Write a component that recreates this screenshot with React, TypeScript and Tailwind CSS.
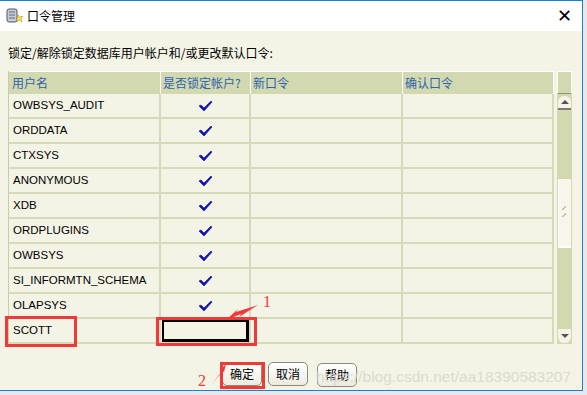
import React from "react";

const users = [
  "OWBSYS_AUDIT",
  "ORDDATA",
  "CTXSYS",
  "ANONYMOUS",
  "XDB",
  "ORDPLUGINS",
  "OWBSYS",
  "SI_INFORMTN_SCHEMA",
  "OLAPSYS",
];

const cjk = { fontFamily: '"Noto Sans CJK SC", "Liberation Sans", sans-serif' };
const latin = { fontFamily: '"Liberation Sans", Arial, sans-serif' };

function Check() {
  return (
    <svg width="15" height="12" viewBox="0 0 15 12">
      <path d="M1 6 L3 5 L6 8 L13 1 L14 2 L6 11 Z" fill="#1010c8" stroke="#0a0a90" strokeWidth="0.6" />
    </svg>
  );
}

function KeyIcon() {
  return (
    <svg width="18" height="18" viewBox="0 0 18 18">
      <rect x="1" y="2" width="10" height="13" rx="2" fill="#c8ccd8" stroke="#556" strokeWidth="1" />
      <path d="M3 5h6M3 8h6M3 11h6" stroke="#667" strokeWidth="1" />
      <path d="M12 8l2 2 3-1-2 3 1 3-3-2-2 2 0-3z" fill="#f4e04a" stroke="#b09010" strokeWidth="0.5" />
    </svg>
  );
}

function Row({ name, checked }: { name: string; checked: boolean }) {
  return (
    <div className="grid grid-cols-[152px_90px_152px_151px] h-[25px] border-b-2 border-[#d6dab8]">
      <div className="border-r-2 border-[#d6dab8] pl-[4px] flex items-center text-[11.5px] text-black" style={latin}>
        {name}
      </div>
      <div className="border-r-2 border-[#d6dab8] flex items-center justify-center">{checked && <Check />}</div>
      <div className="border-r-2 border-[#d6dab8]" />
      <div className="border-r-2 border-[#d6dab8]" />
    </div>
  );
}

function Btn({ label }: { label: string }) {
  return (
    <button
      className="h-[24px] px-[7px] rounded-[5px] border border-[#8a8a7a] bg-gradient-to-b from-white to-[#ecebe0] text-[12px] text-black"
      style={cjk}
    >
      {label}
    </button>
  );
}

export default function App() {
  return (
    <div className="w-[587px] h-[395px] bg-[#e8e8e8] relative overflow-hidden">
      <div className="w-[583px] h-[391px] border-t border-r border-b border-[#1a7fd8] bg-[#f4f4e6] flex flex-col">
        {/* title bar */}
        <div className="h-[30px] bg-white flex items-center pl-[6px] pr-[10px]">
          <KeyIcon />
          <span className="ml-[3px] text-[12px] text-black" style={cjk}>口令管理</span>
          <span className="ml-auto text-[18px] leading-none text-black font-light" style={latin}>✕</span>
        </div>

        <div className="pl-[8px] pt-[13px] text-[12px] text-black h-[40px]" style={cjk}>
          锁定/解除锁定数据库用户帐户和/或更改默认口令:
        </div>

        {/* table + scrollbar */}
        <div className="flex ml-[8px]">
          <div className="border-l border-[#c8ccaa]">
            <div className="grid grid-cols-[152px_90px_152px_151px] h-[23px] bg-[#d2d8b0] border-t border-white text-[12px] text-[#2e63a8]" style={cjk}>
              <div className="border-r border-white pl-[3px] flex items-center">用户名</div>
              <div className="border-r border-white pl-[2px] flex items-center">是否锁定帐户?</div>
              <div className="border-r border-white pl-[2px] flex items-center">新口令</div>
              <div className="border-r border-white pl-[2px] flex items-center">确认口令</div>
            </div>
            {users.map((u) => (
              <Row key={u} name={u} checked />
            ))}
            <div className="grid grid-cols-[152px_90px_152px_151px] h-[25px] border-b-2 border-[#d6dab8]">
              <div className="border-r-2 border-[#d6dab8] pl-[4px] flex items-center text-[11.5px] text-black" style={latin}>
                SCOTT
              </div>
              <div className="border-r-2 border-[#d6dab8] pt-[1px] pl-[1px] pr-[0px] pb-[0px]">
                <div className="h-full border-2 border-black border-r-[3px] border-b-[3px]" />
              </div>
              <div className="border-r-2 border-[#d6dab8]" />
              <div className="border-r-2 border-[#d6dab8]" />
            </div>
          </div>

          {/* scrollbar */}
          <div className="ml-[3px] w-[15px] flex flex-col">
            <div className="h-[23px] border border-white border-b-[#8e9470] bg-[#d2d8b0]" />
            <div className="flex-1 bg-[#d2d8b0] flex flex-col px-[1px] pt-[2px] pb-[1px]">
              <div className="h-[14px] bg-[#f4f4e6] rounded-t-[6px] border-b-2 border-[#7c7c6c] flex items-center justify-center">
                <div className="w-0 h-0 border-l-[4px] border-r-[4px] border-b-[4px] border-l-transparent border-r-transparent border-b-[#555]" />
              </div>
              <div className="h-[69px]" />
              <div className="h-[69px] bg-[#f6f6ea] border-b-2 border-[#8e9470] border-l border-white flex flex-col items-center justify-center gap-[2px]">
                <div className="w-[5px] h-[5px] border-t border-[#a0a888] rotate-[-45deg]" />
                <div className="w-[5px] h-[5px] border-t border-[#a0a888] rotate-[-45deg]" />
              </div>
              <div className="flex-1" />
              <div className="h-[14px] bg-[#f4f4e6] rounded-b-[6px] flex items-center justify-center">
                <div className="w-0 h-0 border-l-[4px] border-r-[4px] border-t-[4px] border-l-transparent border-r-transparent border-t-[#555]" />
              </div>
            </div>
          </div>
        </div>

        {/* buttons */}
        <div className="flex gap-[6px] ml-[222px] mt-[18px]">
          <Btn label="确定" />
          <Btn label="取消" />
          <div className="ml-[3px]">
            <Btn label="帮助" />
          </div>
        </div>
      </div>

      {/* watermark */}
      <div className="absolute left-[316px] top-[365px] text-[15.5px] whitespace-nowrap text-[#d4d4cc] opacity-80" style={latin}>
        https://blog.csdn.net/aa18390583207
      </div>

      {/* red annotations */}
      <div className="absolute left-[5px] top-[316px] w-[72px] h-[31px] border-[3px] border-[#f03a3a]" />
      <div className="absolute left-[156px] top-[317px] w-[101px] h-[29px] border-[3px] border-[#f03a3a]" />
      <div className="absolute left-[220px] top-[362px] w-[45px] h-[27px] border-[3px] border-[#f03a3a]" />
      <svg className="absolute left-0 top-0" width="587" height="395">
        <path d="M258 305 L236 312 L238 309 L226 320 L241 314 L239 317 Z" fill="#f03a3a" />
        <path d="M212 384 L222 372 L220 370 L226 364 L224 372 L222 371 Z" fill="#f03a3a" />
      </svg>
      <span className="absolute left-[263px] top-[290px] text-[16px] text-[#f03a3a]" style={{ fontFamily: '"Liberation Serif", serif' }}>1</span>
      <span className="absolute left-[198px] top-[369px] text-[16px] text-[#f03a3a]" style={{ fontFamily: '"Liberation Serif", serif' }}>2</span>
    </div>
  );
}
